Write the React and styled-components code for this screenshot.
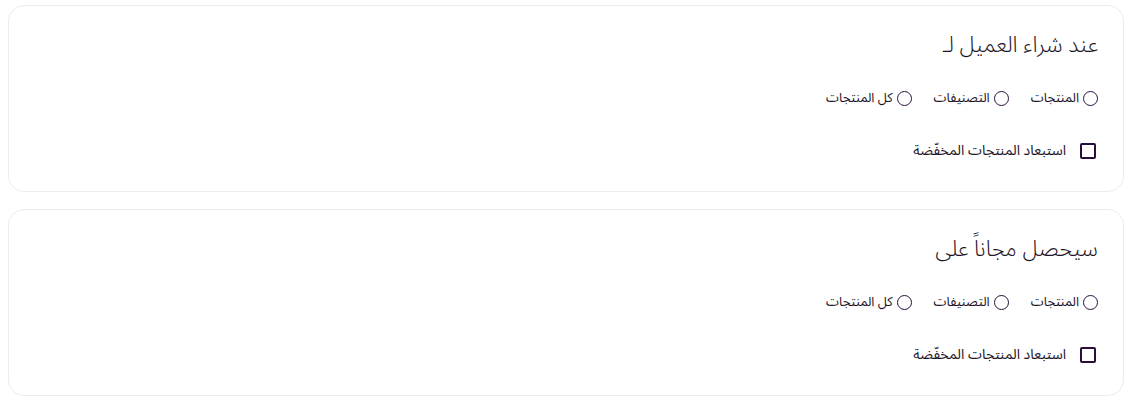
import React from 'react'
import styled, { createGlobalStyle } from 'styled-components'

const GlobalStyle = createGlobalStyle`
  body {
    margin: 0;
    background: #ffffff;
    font-family: "Noto Sans Arabic", "Noto Sans", "DejaVu Sans", sans-serif;
    color: #1c1326;
  }
`

const Page = styled.div`
  direction: rtl;
  display: flex;
  flex-direction: column;
  gap: 17px;
  padding: 5px 7px 0 8px;
`

const Card = styled.section`
  border: 1px solid #ececec;
  border-radius: 16px;
  height: 187px;
  box-sizing: border-box;
  padding: 24px 25px 0;
  display: flex;
  flex-direction: column;
`

const Title = styled.h3`
  margin: 0;
  font-size: 22px;
  font-weight: 300;
  line-height: 30px;
`

const RadioRow = styled.div`
  display: flex;
  gap: 22px;
  margin-top: 28px;
`

const Option = styled.label`
  display: flex;
  align-items: center;
  gap: 4px;
  font-size: 13px;
  line-height: 20px;
`

const Radio = styled.span`
  width: 15px;
  height: 15px;
  box-sizing: border-box;
  border: 1.6px solid #2a0f3d;
  border-radius: 50%;
`

const CheckRow = styled.label`
  display: flex;
  align-items: center;
  gap: 14px;
  margin-top: 33px;
  margin-right: 2px;
  font-size: 14px;
  line-height: 20px;
`

const Box = styled.span`
  width: 16px;
  height: 16px;
  box-sizing: border-box;
  border: 2px solid #2a0f3d;
  border-radius: 2px;
`

const options = ['المنتجات', 'التصنيفات', 'كل المنتجات']

const Section = ({ title }) => (
  <Card>
    <Title>{title}</Title>
    <RadioRow>
      {options.map(o => (
        <Option key={o}>
          <Radio />
          {o}
        </Option>
      ))}
    </RadioRow>
    <CheckRow>
      <Box />
      استبعاد المنتجات المخفّضة
    </CheckRow>
  </Card>
)

const App = () => (
  <>
    <GlobalStyle />
    <Page>
      <Section title="عند شراء العميل لـ" />
      <Section title="سيحصل مجاناً على" />
    </Page>
  </>
)

export default App
